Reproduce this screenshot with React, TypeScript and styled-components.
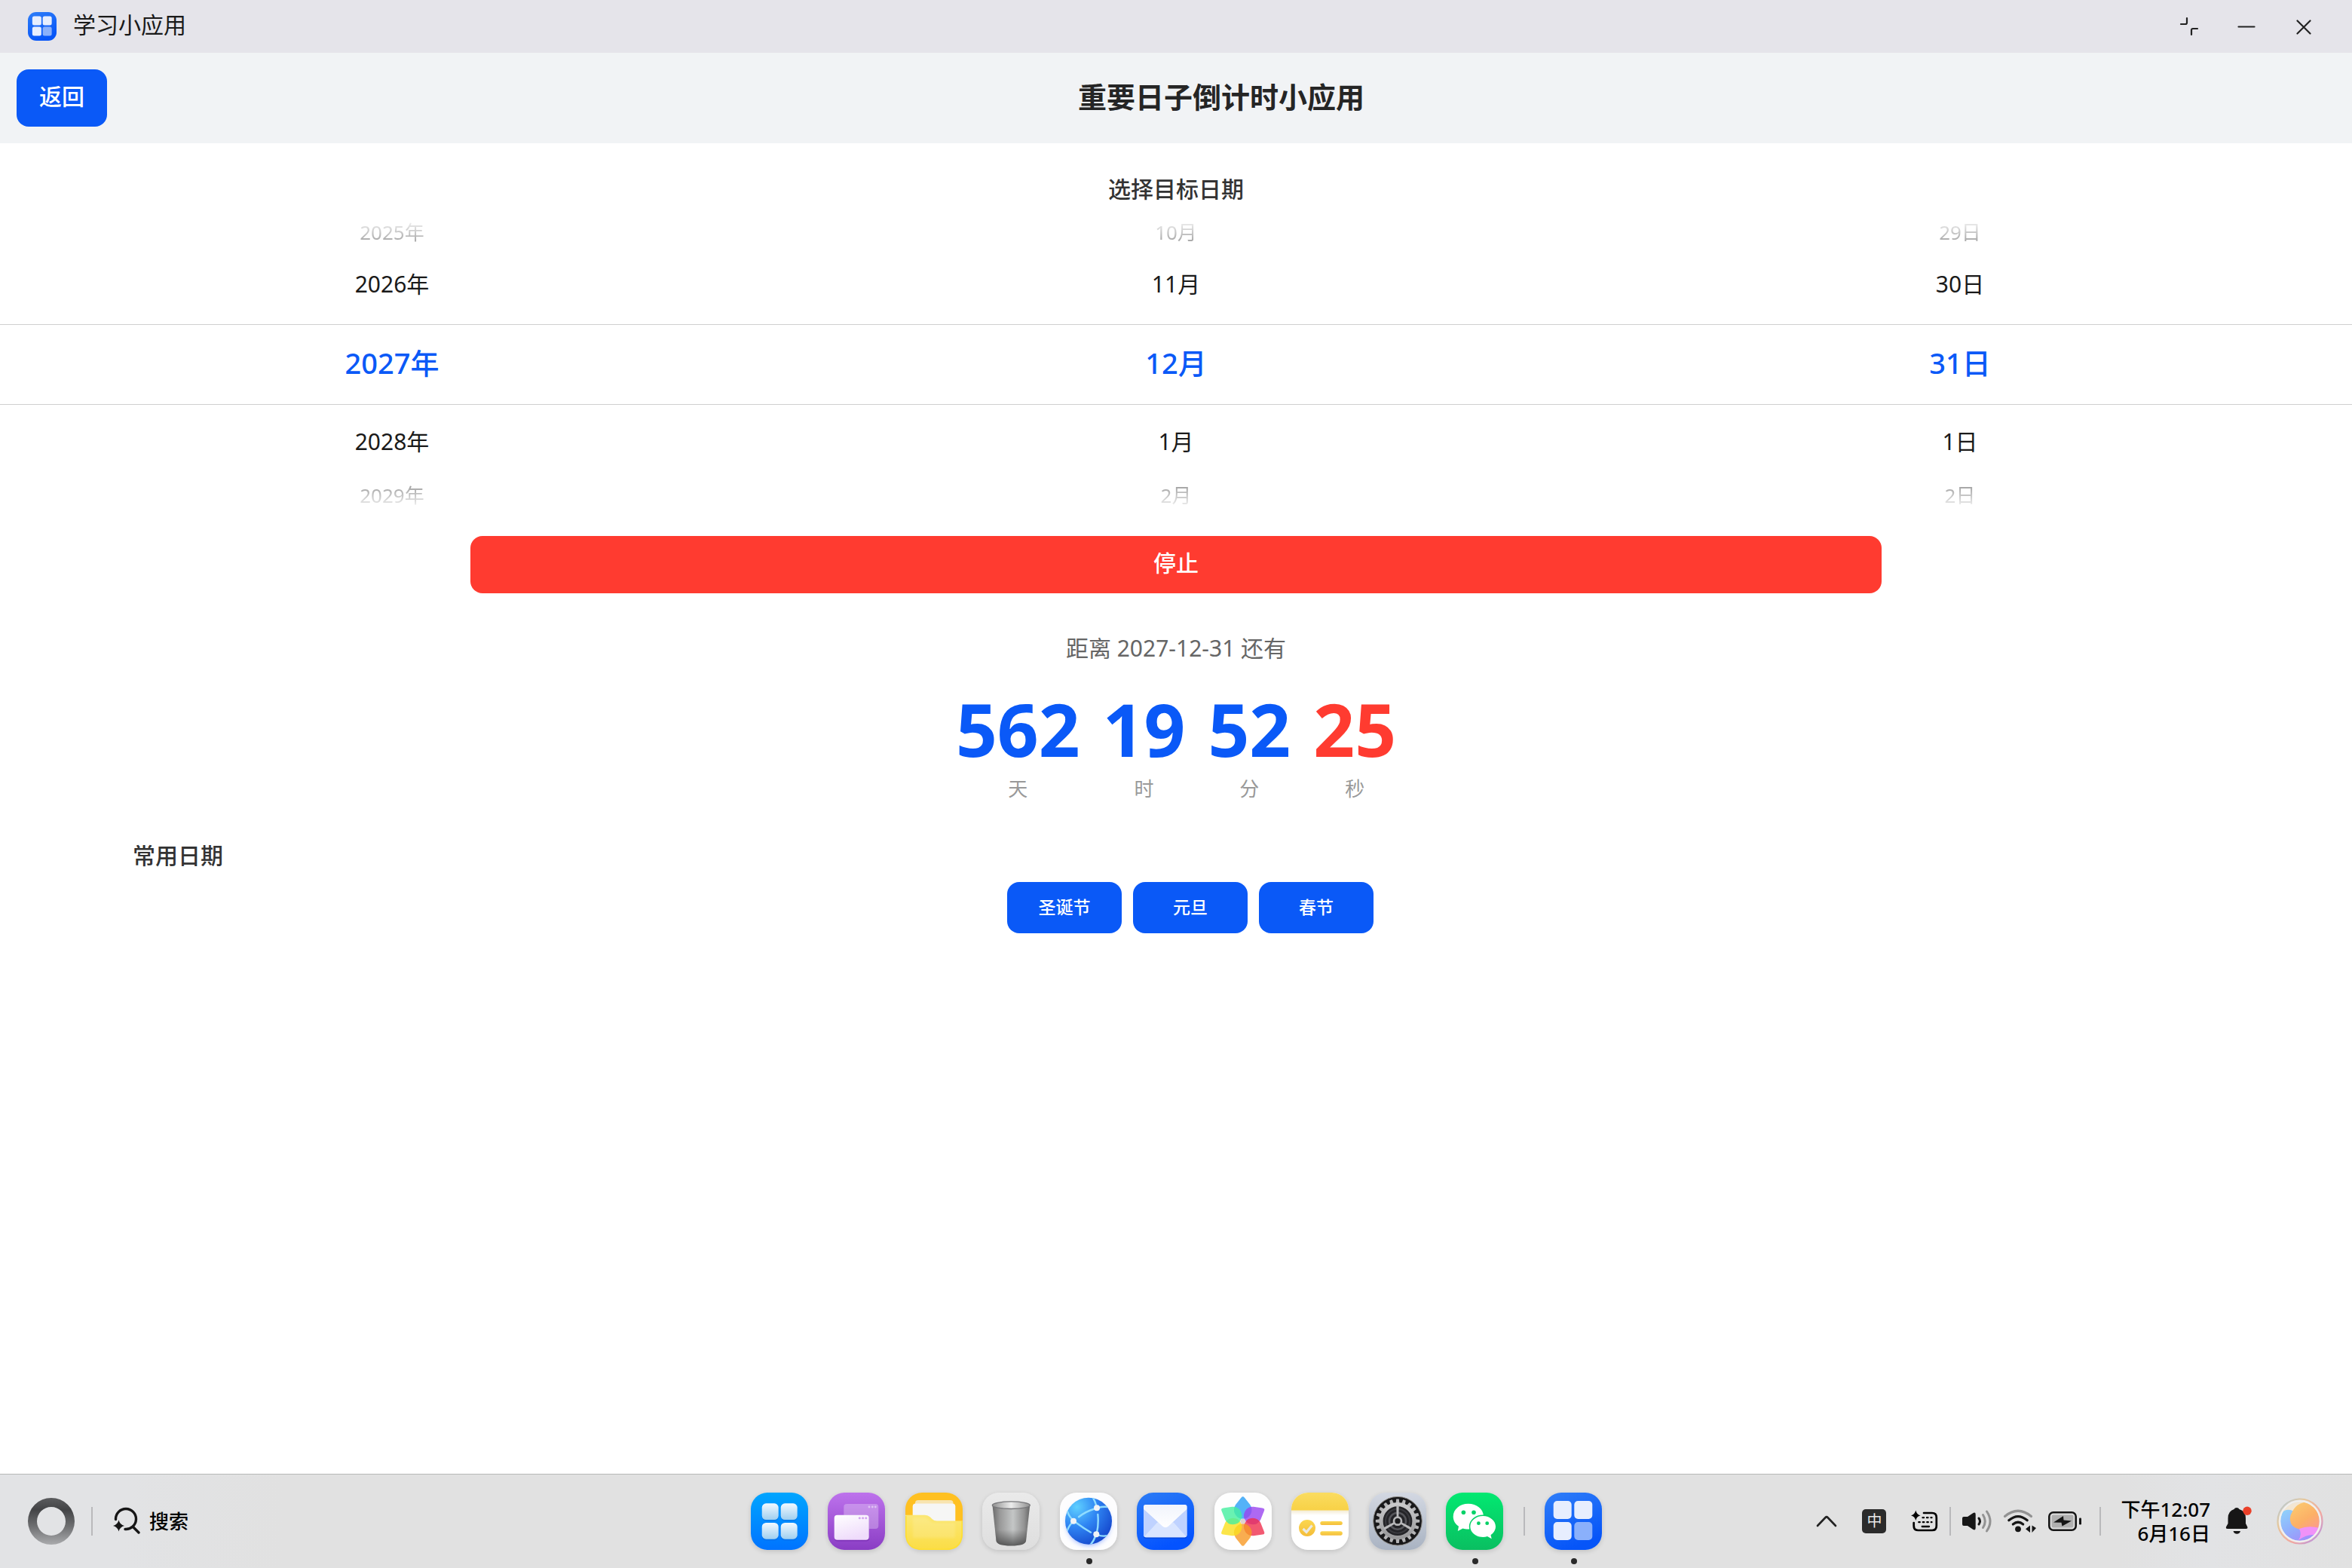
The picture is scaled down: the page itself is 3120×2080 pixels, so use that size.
import React from "react";
import styled, { createGlobalStyle, css } from "styled-components";

const GlobalStyle = createGlobalStyle`
  *, *::before, *::after { box-sizing: border-box; }
  body { margin: 0; background: #fff; }
  button { font: inherit; border: 0; padding: 0; background: none; cursor: pointer; color: inherit; }
  h1, h2, p, ul, dl, dd, dt { margin: 0; padding: 0; }
  ul { list-style: none; }
  svg { display: block; overflow: visible; }
`;

const blue = "#0a59f7";
const red = "#ff3b30";

const Screen = styled.div`
  min-height: 100vh;
  display: flex;
  flex-direction: column;
  font-family: "Noto Sans", "Noto Sans CJK SC", sans-serif;
  font-size: 30px;
  line-height: 40px;
  color: #1a1a1a;
`;

/* ---------- window frame ---------- */

const TitleBar = styled.header`
  display: flex;
  align-items: center;
  height: 70px;
  padding: 0 26px 0 37px;
  background: #e5e4ea;
`;

const AppName = styled.span`
  flex: 1;
  padding: 0 0 4px 22px;
`;

const WindowButton = styled.button`
  display: grid;
  place-items: center;
  width: 76px;
  height: 70px;
`;

const AppHeader = styled.div`
  display: flex;
  align-items: center;
  height: 120px;
  padding: 0 22px;
  background: #f1f3f5;
`;

const AppTitle = styled.h1`
  flex: 1;
  padding-bottom: 4px;
  text-align: center;
  font-size: 38px;
  line-height: 48px;
  font-weight: 700;
  color: #252525;
`;

const ActionButton = styled.button<{ $size: "back" | "wide" | "chip" }>`
  border-radius: 16px;
  background: ${(p) => (p.$size === "wide" ? red : blue)};
  color: #fff;
  font-weight: 500;
  ${(p) => p.$size === "back" && css`height: 76px; padding: 0 30px 4px;`}
  ${(p) => p.$size === "wide" && css`height: 76px; width: 60%; margin-top: 34px; padding-bottom: 4px;`}
  ${(p) => p.$size === "chip" && css`height: 68px; width: 152px; padding-bottom: 2px; font-size: 23px;`}
`;

/* ---------- page ---------- */

const Main = styled.main`
  flex: 1;
  display: flex;
  flex-direction: column;
  align-items: center;
  padding-top: 41px;
`;

const SectionTitle = styled.h2`
  font-size: 30px;
  line-height: 40px;
  font-weight: 500;
  color: #333;
`;

const Picker = styled.div`
  display: grid;
  grid-template-columns: repeat(3, 1fr);
  width: 100%;
  margin-top: 18px;
`;

const Wheel = styled.ul`
  text-align: center;
`;

type Slot = "top" | "near" | "selected" | "bottom";

const slotStyles = {
  top: css`
    height: 39px;
    padding-bottom: 2px;
    font-size: 26px;
    mask-image: linear-gradient(to bottom, transparent, rgba(0, 0, 0, 0.48));
  `,
  near: css`
    height: 102px;
    padding-bottom: 4px;
    font-size: 30px;
  `,
  selected: css`
    height: 107px;
    padding-bottom: 6px;
    font-size: 38px;
    font-weight: 500;
    color: ${blue};
    border-top: 1px solid #cfcfcf;
    border-bottom: 1px solid #cfcfcf;
  `,
  bottom: css`
    height: 38px;
    padding-bottom: 2px;
    font-size: 26px;
    mask-image: linear-gradient(to top, transparent, rgba(0, 0, 0, 0.48));
  `,
};

const WheelItem = styled.li<{ $slot: Slot }>`
  display: flex;
  align-items: center;
  justify-content: center;
  ${(p) => slotStyles[p.$slot]}
`;

const Target = styled.p`
  margin-top: 53px;
  color: #666;
`;

const Countdown = styled.dl`
  display: flex;
  gap: 30px;
  margin-top: 31px;
`;

const Unit = styled.div`
  display: flex;
  flex-direction: column-reverse;
  align-items: center;
  gap: 5px;
`;

const UnitValue = styled.dd<{ $color: string }>`
  font-size: 96px;
  line-height: 112px;
  font-weight: 700;
  color: ${(p) => p.$color};
`;

const UnitName = styled.dt`
  font-size: 26px;
  line-height: 36px;
  color: #999;
`;

const Presets = styled.section`
  width: 100%;
  margin-top: 51px;
  padding: 0 calc(5% - 18px) 0 calc(5% + 20px);
`;

const PresetRow = styled.div`
  display: flex;
  justify-content: center;
  gap: 15px;
  margin-top: 15px;
`;

/* ---------- task bar ---------- */

const TaskBar = styled.footer`
  display: grid;
  grid-template-columns: 1fr auto 1fr;
  align-items: center;
  height: 125px;
  border-top: 1px solid #b6b9b7;
  background: linear-gradient(to right, #e2e3e5 5%, #e1e1e1 12%, #e1e1e1 90%, #e2e3e5 94%, #e1e1e1);
`;

const StartArea = styled.div`
  display: flex;
  align-items: center;
  padding-left: 37px;
  gap: 22px;
`;

const SearchButton = styled.button`
  display: flex;
  align-items: center;
  gap: 12px;
  padding-left: 5px;
  font-size: 26px;
  font-weight: 500;
  color: #000;
`;

const Divider = styled.span`
  width: 2px;
  height: 38px;
  background: #b9b9bb;
`;

const Dock = styled.nav`
  display: flex;
  align-items: center;
  gap: 26px;
`;

const DockApps = styled.div`
  display: flex;
  justify-content: space-between;
  width: 999px;
`;

const DockButton = styled.button<{ $running?: boolean }>`
  position: relative;
  width: 76px;
  height: 76px;
  border-radius: 22px;
  box-shadow: 0 2px 6px rgba(0, 0, 0, 0.14);
  ${(p) =>
    p.$running &&
    css`
      &::after {
        content: "";
        position: absolute;
        left: 35px;
        bottom: -19px;
        width: 8px;
        height: 8px;
        border-radius: 50%;
        background: #2a2a2a;
      }
    `}
`;

const Tray = styled.div`
  display: flex;
  align-items: center;
  justify-content: flex-end;
  padding-right: 38px;
`;

const TrayGroup = styled.div<{ $gap: number; $after: number }>`
  display: flex;
  align-items: center;
  gap: ${(p) => p.$gap}px;
  padding: 0 ${(p) => p.$after}px 0 15px;
`;

const InputBadge = styled.button`
  width: 32px;
  height: 32px;
  border-radius: 5px;
  background: #2b2b2b;
  color: #e8e8e8;
  font-size: 20px;
  line-height: 30px;
`;

const Clock = styled.time`
  padding: 0 21px 0 26px;
  text-align: right;
  font-size: 26px;
  line-height: 32px;
  font-weight: 500;
  color: #000;
`;

const ClockLine = styled.span`
  display: block;
`;

const BellButton = styled.button`
  margin-right: 33px;
`;

/* ---------- icons ---------- */

const Tile = ({ fill }: { fill: string }) => <rect width="76" height="76" rx="22" fill={fill} />;

const Grad = ({ id, from, to, diagonal }: { id: string; from: string; to: string; diagonal?: boolean }) => (
  <linearGradient id={id} x1="0" y1="0" x2={diagonal ? "0.4" : "0"} y2="1">
    <stop stopColor={from} />
    <stop offset="1" stopColor={to} />
  </linearGradient>
);

const AppLogo = ({ size, id }: { size: number; id: string }) => (
  <svg width={size} height={size} viewBox="0 0 76 76" aria-hidden="true">
    <defs><Grad id={id} from="#2f7ef8" to="#0655f8" diagonal /></defs>
    <Tile fill={`url(#${id})`} />
    <g fill="#e7eefe">
      <rect x="11.7" y="11" width="24" height="24" rx="5" />
      <rect x="39.3" y="11" width="24" height="24" rx="5" />
      <rect x="11.7" y="39" width="24" height="24" rx="5" />
      <rect x="39.3" y="39" width="24" height="24" rx="5" fill="#8ab0fb" />
    </g>
  </svg>
);

const IconSvg = ({ children }: { children: React.ReactNode }) => (
  <svg width="76" height="76" viewBox="0 0 76 76" aria-hidden="true">{children}</svg>
);

const LauncherIcon = () => (
  <IconSvg>
    <defs>
      <Grad id="lnBg" from="#00a5ff" to="#0073ff" />
      <Grad id="lnSq" from="#f2f9ff" to="#9fcff0" />
    </defs>
    <Tile fill="url(#lnBg)" />
    {[[14.7, 14.3], [39.7, 14.3], [14.7, 40], [39.7, 40]].map(([x, y]) => (
      <g key={`${x}-${y}`}>
        <rect x={x} y={y + 1.5} width="22" height="22" rx="5.5" fill="#0060d0" opacity=".35" />
        <rect x={x} y={y} width="22" height="21.7" rx="5.5" fill="url(#lnSq)" />
      </g>
    ))}
  </IconSvg>
);

const WindowsIcon = () => (
  <IconSvg>
    <defs>
      <Grad id="wnBg" from="#bd72ec" to="#8a3dc4" />
      <Grad id="wnFr" from="#ffffff" to="#efdcfb" diagonal />
    </defs>
    <Tile fill="url(#wnBg)" />
    <rect x="21.3" y="15" width="46" height="33" rx="4" fill="#fff" opacity=".28" />
    <rect x="9" y="31.5" width="46" height="33" rx="4" fill="#6a1fa5" opacity=".45" />
    <rect x="8.7" y="29.7" width="46" height="33" rx="4" fill="url(#wnFr)" />
    {[55, 59.3, 63.3].map((x) => <circle key={x} cx={x} cy="19" r="1.4" fill="#fff" opacity=".45" />)}
    {[42.3, 46.6, 50.8].map((x) => <circle key={x} cx={x} cy="33.8" r="1.5" fill="#d2a3f0" />)}
  </IconSvg>
);

const FolderIcon = () => (
  <IconSvg>
    <defs>
      <clipPath id="fdClip"><rect width="76" height="76" rx="22" /></clipPath>
      <Grad id="fdFr" from="#fbe774" to="#fbdd45" />
      <filter id="fdBlur"><feGaussianBlur stdDeviation="1.5" /></filter>
    </defs>
    <g clipPath="url(#fdClip)">
      <rect width="76" height="76" fill="#ffc021" />
      <rect x="13" y="10" width="50.5" height="20" rx="4" fill="#f8e4b0" />
      <rect x="9.7" y="14.5" width="56.6" height="40" rx="4" fill="#f6f6f5" />
      <path d="M0 29.7H26Q30 29.7 33 32.5L35.500 35Q38 37.500 42 37.500H76V76H0Z" fill="url(#fdFr)" />
      <path d="M10 33H27L36 40H66V60H10Z" fill="#fff" opacity=".13" filter="url(#fdBlur)" />
    </g>
    <path d="M.8 31V54Q.8 75.200 22 75.200H54Q75.200 75.200 75.200 54V38" fill="none" stroke="#ffdf30" strokeWidth="1.5" />
  </IconSvg>
);

const TrashIcon = () => (
  <IconSvg>
    <defs>
      <Grad id="trBg" from="#eaeaea" to="#dedede" />
      <linearGradient id="trBody" x1="0" x2="1" y1="0" y2="0">
        <stop stopColor="#6b6b6b" /><stop offset=".2" stopColor="#999" /><stop offset=".55" stopColor="#c4c6c6" />
        <stop offset=".85" stopColor="#929292" /><stop offset="1" stopColor="#666" />
      </linearGradient>
      <linearGradient id="trShade" x1="0" x2="0" y1="0" y2="1">
        <stop offset=".6" stopColor="#444" stopOpacity="0" /><stop offset="1" stopColor="#3a3a3a" stopOpacity=".75" />
      </linearGradient>
      <linearGradient id="trIn" x1="0" x2="1" y1="0" y2="0">
        <stop stopColor="#8f8f8f" /><stop offset=".5" stopColor="#ececec" /><stop offset="1" stopColor="#909090" />
      </linearGradient>
    </defs>
    <Tile fill="url(#trBg)" />
    <path d="M13.500 17L18.500 64Q19.500 70.500 38.300 70.500T58 64L63.200 17Z" fill="url(#trBody)" />
    <path d="M13.500 17L18.500 64Q19.500 70.500 38.300 70.500T58 64L63.200 17Z" fill="url(#trShade)" />
    <ellipse cx="38.300" cy="16.700" rx="25" ry="4.800" fill="url(#trIn)" stroke="#77777a" strokeWidth="1.300" />
  </IconSvg>
);

const BrowserIcon = () => (
  <IconSvg>
    <defs>
      <radialGradient id="brBall" cx=".25" cy=".2" r=".95">
        <stop stopColor="#5fd0ff" /><stop offset=".45" stopColor="#2f85f3" /><stop offset="1" stopColor="#1240c8" />
      </radialGradient>
      <filter id="brBlur" x="-30%" y="-30%" width="160%" height="160%"><feGaussianBlur stdDeviation="3" /></filter>
      <clipPath id="brClip"><circle cx="38" cy="37.700" r="31" /></clipPath>
    </defs>
    <Tile fill="#fdfdfe" />
    <circle cx="38" cy="41" r="29" fill="#5580ff" opacity=".6" filter="url(#brBlur)" />
    <circle cx="38" cy="37.700" r="31" fill="url(#brBall)" />
    <g clipPath="url(#brClip)" fill="none" stroke="#8fdcff" strokeWidth="2.400" strokeLinecap="round">
      <path d="M43 5Q47 12 48.500 18M51 20Q58 18 66 19.300M46 21.500Q34 25 25 32.300M50.300 29Q51.500 42 49 53M16 35Q11 30 9 22M16 40Q11 45 9 53M21 39.500Q31 47 41 52.700M50 56Q57 59 66 56.500M47 58Q45 64 40 70" />
    </g>
    <g fill="#f1f3f6">
      <circle cx="49" cy="20.300" r="4" /><circle cx="18" cy="37.700" r="4" /><circle cx="48.300" cy="55.300" r="4" />
    </g>
  </IconSvg>
);

const MailIcon = () => (
  <IconSvg>
    <defs>
      <Grad id="mlBg" from="#2c7cf5" to="#0453ff" diagonal />
      <Grad id="mlBody" from="#a8c0f8" to="#cfe0ff" />
      <Grad id="mlFlap" from="#f1f4fc" to="#ffffff" />
    </defs>
    <Tile fill="url(#mlBg)" />
    <rect x="9" y="18" width="57.500" height="43" rx="3" fill="#0633b0" opacity=".4" />
    <rect x="9" y="16" width="57.500" height="43.300" rx="3" fill="url(#mlBody)" />
    <path d="M10 58.500L27 39.500H49L65.500 58.500Q65 59.300 63.500 59.300H12Q10.500 59.300 10 58.500Z" fill="#d9e5ff" />
    <path d="M9 22L27 39.500L10 58Q9 57 9 56ZM66.500 22L49 39.500L65.500 58Q66.500 57 66.500 56Z" fill="#bfd2ff" />
    <path d="M9 22V19Q9 16 12 16H63.500Q66.500 16 66.500 19V22L42 44.500Q38 48 34 44.500Z" fill="url(#mlFlap)" />
  </IconSvg>
);

const petals = ["#2aa0f7", "#9a45f0", "#f0304f", "#f89a25", "#fbe01e", "#45f0a0"];

const GalleryIcon = () => (
  <IconSvg>
    <Tile fill="#fefefe" />
    <g transform="translate(37.700 38)">
      {petals.map((color, i) => (
        <path
          key={color}
          d="M-1.500 -31Q0 -33 1.500 -31L9 -21.500Q13 -15.500 9.500 -9.500Q6 -4 0 -4T-9.500 -9.500Q-13 -15.500 -9 -21.500Z"
          transform={`rotate(${i * 60})`}
          fill={color}
          stroke={color}
          strokeWidth="1.500"
          opacity=".8"
        />
      ))}
      <circle r="3.300" fill="#ddd3cf" />
    </g>
  </IconSvg>
);

const NotesIcon = () => (
  <IconSvg>
    <defs>
      <clipPath id="ntClip"><rect width="76" height="76" rx="22" /></clipPath>
      <Grad id="ntTop" from="#fadc60" to="#f8d146" />
      <Grad id="ntBar" from="#fbd750" to="#f4bd3a" />
      <Grad id="ntSh" from="#f3ead0" to="#ffffff" />
    </defs>
    <g clipPath="url(#ntClip)">
      <rect width="76" height="76" fill="#fff" />
      <rect y="23" width="76" height="7" fill="url(#ntSh)" />
      <rect width="76" height="23.500" fill="url(#ntTop)" />
    </g>
    <circle cx="21" cy="47" r="11" fill="url(#ntBar)" />
    <path d="M15.500 48L20 52.500L27.500 43.500" fill="none" stroke="#e9e9e4" strokeWidth="3.200" />
    <rect x="38.300" y="38" width="29.500" height="5" rx="2.500" fill="url(#ntBar)" />
    <rect x="38.300" y="51.300" width="29.500" height="5.500" rx="2.700" fill="url(#ntBar)" />
  </IconSvg>
);

const SettingsIcon = () => (
  <IconSvg>
    <defs>
      <Grad id="stBg" from="#d3d8e2" to="#a9b3c2" />
      <Grad id="stGear" from="#c9c9cb" to="#98989a" />
    </defs>
    <Tile fill="url(#stBg)" />
    <circle cx="38" cy="37.700" r="32.300" fill="#18181a" stroke="#8d8a85" strokeWidth="1" />
    {Array.from({ length: 20 }, (_, i) => (
      <path key={i} d="M35.600 14L36.200 8.500H39.800L40.400 14Z" transform={`rotate(${i * 18} 38 37.700)`} fill="#b5b5b7" />
    ))}
    <circle cx="38" cy="37.700" r="22" fill="#242428" stroke="url(#stGear)" strokeWidth="5.200" />
    <circle cx="38" cy="37.700" r="16" fill="none" stroke="#3a3a3f" strokeWidth="2" />
    <circle cx="38" cy="37.700" r="11" fill="none" stroke="#55555a" strokeWidth="2.500" />
    {[0, 120, 240].map((a) => (
      <path key={a} d="M36.300 17L36.700 33H39.300L39.700 17Z" transform={`rotate(${a} 38 37.700)`} fill="#b9b9bb" />
    ))}
    <circle cx="38" cy="37.700" r="5" fill="#1c1c1e" stroke="#b5b5b7" strokeWidth="2.700" />
  </IconSvg>
);

const WeChatIcon = () => (
  <IconSvg>
    <defs><Grad id="wcBg" from="#02e871" to="#0abf61" /></defs>
    <Tile fill="url(#wcBg)" />
    <path d="M29.700 14.800C18.500 14.800 9.700 22.300 9.700 31.700C9.700 37 12.500 41.700 17 44.800L15.800 51L22.500 47.500C25 48.300 27 48.600 31 48.500L50 31C49.500 22 41 14.800 29.700 14.800Z" fill="#fff" />
    <g fill="#05d268"><circle cx="23.400" cy="26.300" r="2.800" /><circle cx="37" cy="26.300" r="2.800" /></g>
    <ellipse cx="49.200" cy="45" rx="18.400" ry="15.600" fill="#05d066" />
    <path d="M49.200 30.900C39.800 30.900 32.300 37.200 32.300 45S39.800 59 49.200 59C51.300 59 53.300 58.700 55 58.100L60.700 61.200L59.500 56.200C63.500 53.500 66 49.500 66 45C66 37.200 58.600 30.900 49.200 30.900Z" fill="#fff" />
    <g fill="#05d066"><circle cx="43.400" cy="40.700" r="2.400" /><circle cx="54.700" cy="40.700" r="2.400" /></g>
  </IconSvg>
);

const RingIcon = () => (
  <svg width="62" height="62" viewBox="0 0 62 62" aria-hidden="true">
    <defs>
      <linearGradient id="rg" x1="0" y1="0" x2="0" y2="1">
        <stop stopColor="#5b5c5e" /><stop offset=".25" stopColor="#434446" />
        <stop offset=".6" stopColor="#6d6e70" /><stop offset="1" stopColor="#aaabad" />
      </linearGradient>
    </defs>
    <path fillRule="evenodd" fill="url(#rg)" d="M31 0A31 31 0 1 1 31 62A31 31 0 1 1 31 0ZM31 12A19 19 0 1 0 31 50A19 19 0 1 0 31 12Z" />
  </svg>
);

const SearchIcon = () => (
  <svg width="36" height="36" viewBox="0 0 36 36" fill="none" stroke="#161616" strokeWidth="3.400" strokeLinecap="round" aria-hidden="true">
    <path d="M3.500 15.500A13.500 13.500 0 1 1 16 28.500M26 25L34 33" />
    <path d="M7.500 16.500Q9 22.500 15 24Q9 25.500 7.500 31.500Q6 25.500 0 24Q6 22.500 7.500 16.500Z" fill="#161616" stroke="none" />
  </svg>
);

const KeyboardIcon = () => (
  <svg width="36" height="30" viewBox="0 0 36 30" fill="none" stroke="#000" strokeWidth="2.700" strokeLinecap="round" aria-hidden="true">
    <path d="M17 4H28Q33.800 4 33.800 10V21Q33.800 27 28 27H9.500Q3.700 27 3.700 21V17" />
    <path d="M14.700 22H24" strokeWidth="2.300" />
    <path d="M15.500 10.200H27.500" strokeWidth="2.300" strokeDasharray="1.500 4" />
    <path d="M10.300 16.200H27.500" strokeWidth="2.300" strokeDasharray="1.500 4" />
    <path d="M6.300 .5Q7.500 6 12.500 7.300Q7.500 8.600 6.300 14Q5 8.600 0 7.300Q5 6 6.300 .5Z" fill="#000" stroke="none" />
  </svg>
);

const SpeakerIcon = () => (
  <svg width="39" height="32" viewBox="0 0 39 32" fill="none" strokeLinecap="round" strokeWidth="3" aria-hidden="true">
    <path d="M2 10H7L14.500 5Q17.700 3.500 17.700 7V25Q17.700 28.500 14.500 27L7 22H2Q0 22 0 20V12Q0 10 2 10Z" fill="#161616" />
    <path d="M22 12Q25 16 22 20" stroke="#161616" />
    <path d="M27.500 7.500Q33 16 27.500 24.500M32.500 3Q41.500 16 32.500 29" stroke="#929292" />
  </svg>
);

const WifiIcon = () => (
  <svg width="43" height="32" viewBox="0 0 43 32" fill="none" strokeLinecap="round" strokeWidth="3.200" aria-hidden="true">
    <path d="M1.500 9.500Q19 -5 36.500 9.500" stroke="#929292" />
    <path d="M6.800 14.800Q19 4.500 31.200 14.800M12.300 20Q19 14.500 25.700 20" stroke="#161616" />
    <circle cx="19" cy="26.300" r="3.900" fill="#161616" />
    <path d="M35 21.500V31L29 26.200ZM37.500 21.500V31L43 25Z" fill="#161616" />
  </svg>
);

const BatteryIcon = () => (
  <svg width="44" height="26" viewBox="0 0 44 26" aria-hidden="true">
    <rect x="1.300" y="1.300" width="35.400" height="23.400" rx="5.500" fill="none" stroke="#161616" strokeWidth="2.600" />
    <rect x="4.500" y="4.500" width="29" height="17" rx="2" fill="#b0b0b0" />
    <path d="M20 6L7 14.500L17.500 14.800L18.500 19.500L31 12.500L20.500 11.500Z" fill="#161616" />
    <rect x="41" y="8.500" width="3" height="9" rx="1.300" fill="#161616" />
  </svg>
);

const BellIcon = () => (
  <svg width="34" height="36" viewBox="0 0 34 36" fill="#161616" aria-hidden="true">
    <path d="M14 0Q16.500 0 17.500 2Q26 4.500 26 14V21L28.300 25.500Q29 28 26.500 28H1.800Q-.700 28 0 25.500L2.500 21V14Q2.500 4.500 10.500 2Q11.500 0 14 0Z" />
    <path d="M9.500 31H19Q18 34.800 14.300 34.800T9.500 31Z" />
    <circle cx="28" cy="4.300" r="5.700" fill="#ea4029" />
  </svg>
);

const OrbIcon = () => (
  <svg width="62" height="62" viewBox="0 0 62 62" aria-hidden="true">
    <defs>
      <linearGradient id="obRing" x1="0" y1="0" x2="1" y2="1">
        <stop stopColor="#a8cbe8" /><stop offset=".3" stopColor="#e5c79a" /><stop offset=".65" stopColor="#f2a7a0" /><stop offset="1" stopColor="#a78ff0" />
      </linearGradient>
      <linearGradient id="obBlue" x1="0" y1="0" x2=".6" y2="1">
        <stop offset=".2" stopColor="#90d6fa" /><stop offset=".6" stopColor="#90b2fc" /><stop offset="1" stopColor="#a389fa" />
      </linearGradient>
      <linearGradient id="obSun" x1="0" y1="0" x2=".7" y2="1">
        <stop stopColor="#fbcf72" /><stop offset=".6" stopColor="#fcb066" /><stop offset="1" stopColor="#fb9a90" />
      </linearGradient>
      <clipPath id="obClip"><circle cx="31" cy="31" r="26" /></clipPath>
    </defs>
    <circle cx="31" cy="31" r="29.500" fill="#eceaea" stroke="url(#obRing)" strokeWidth="2.200" />
    <g clipPath="url(#obClip)">
      <rect width="62" height="62" fill="url(#obBlue)" />
      <path d="M4 22Q12 13 21 17L34 20L40 0H4Z" fill="#f3e6d2" />
      <path d="M21 18Q27 6 42 5L62 10V46H50Q44 40 33 42Q19 40 18 30Q17 24 21 18Z" fill="url(#obSun)" />
      <path d="M30 41Q42 36 57 40L50 49Q40 48 29 56Q34 49 30 41Z" fill="#f092f8" />
    </g>
    <circle cx="31" cy="31" r="26.500" fill="none" stroke="#f3f1ee" strokeWidth="1.500" />
  </svg>
);

/* ---------- data ---------- */

const slots: Slot[] = ["top", "near", "selected", "near", "bottom"];

const wheels = [
  { label: "年", items: ["2025年", "2026年", "2027年", "2028年", "2029年"] },
  { label: "月", items: ["10月", "11月", "12月", "1月", "2月"] },
  { label: "日", items: ["29日", "30日", "31日", "1日", "2日"] },
];

const units = [
  { name: "天", value: "562", color: blue },
  { name: "时", value: "19", color: blue },
  { name: "分", value: "52", color: blue },
  { name: "秒", value: "25", color: red },
];

const dockApps = [
  { name: "启动台", icon: <LauncherIcon /> },
  { name: "多任务", icon: <WindowsIcon /> },
  { name: "文件管理", icon: <FolderIcon /> },
  { name: "回收站", icon: <TrashIcon /> },
  { name: "浏览器", icon: <BrowserIcon />, running: true },
  { name: "邮件", icon: <MailIcon /> },
  { name: "图库", icon: <GalleryIcon /> },
  { name: "备忘录", icon: <NotesIcon /> },
  { name: "设置", icon: <SettingsIcon /> },
  { name: "微信", icon: <WeChatIcon />, running: true },
];

export default function App() {
  return (
    <Screen>
      <GlobalStyle />
      <TitleBar>
        <AppLogo size={38} id="logoTitle" />
        <AppName>学习小应用</AppName>
        <WindowButton aria-label="还原">
          <svg width="24" height="24" viewBox="0 0 24 24" fill="none" stroke="#222" strokeWidth="2.200" strokeLinecap="round">
            <path d="M1 9H7Q9 9 9 7V1M23 15H17Q15 15 15 17V23" />
          </svg>
        </WindowButton>
        <WindowButton aria-label="最小化">
          <svg width="24" height="24" viewBox="0 0 24 24" stroke="#222" strokeWidth="2.200" strokeLinecap="round">
            <path d="M1.500 12.500H22.500" />
          </svg>
        </WindowButton>
        <WindowButton aria-label="关闭">
          <svg width="24" height="24" viewBox="0 0 24 24" stroke="#222" strokeWidth="2.200" strokeLinecap="round">
            <path d="M3.500 4.500L20.500 21.500M20.500 4.500L3.500 21.500" />
          </svg>
        </WindowButton>
      </TitleBar>

      <AppHeader>
        <ActionButton $size="back">返回</ActionButton>
        <AppTitle>重要日子倒计时小应用</AppTitle>
      </AppHeader>

      <Main>
        <SectionTitle>选择目标日期</SectionTitle>
        <Picker>
          {wheels.map((wheel) => (
            <Wheel key={wheel.label} role="listbox" aria-label={wheel.label}>
              {wheel.items.map((item, i) => (
                <WheelItem key={item} role="option" aria-selected={i === 2} $slot={slots[i]}>
                  {item}
                </WheelItem>
              ))}
            </Wheel>
          ))}
        </Picker>
        <ActionButton $size="wide">停止</ActionButton>
        <Target>距离 2027-12-31 还有</Target>
        <Countdown>
          {units.map((unit) => (
            <Unit key={unit.name}>
              <UnitName>{unit.name}</UnitName>
              <UnitValue $color={unit.color}>{unit.value}</UnitValue>
            </Unit>
          ))}
        </Countdown>
        <Presets>
          <SectionTitle>常用日期</SectionTitle>
          <PresetRow>
            {["圣诞节", "元旦", "春节"].map((name) => (
              <ActionButton key={name} $size="chip">{name}</ActionButton>
            ))}
          </PresetRow>
        </Presets>
      </Main>

      <TaskBar>
        <StartArea>
          <button aria-label="控制中心"><RingIcon /></button>
          <Divider />
          <SearchButton><SearchIcon />搜索</SearchButton>
        </StartArea>
        <Dock>
          <DockApps>
            {dockApps.map((app) => (
              <DockButton key={app.name} aria-label={app.name} $running={app.running}>{app.icon}</DockButton>
            ))}
          </DockApps>
          <Divider />
          <DockButton aria-label="学习小应用" $running><AppLogo size={76} id="logoDock" /></DockButton>
        </Dock>
        <Tray>
          <TrayGroup $gap={33} $after={15}>
            <button aria-label="展开">
              <svg width="28" height="16" viewBox="0 0 28 16" fill="none" stroke="#222" strokeWidth="2.600" strokeLinecap="round" strokeLinejoin="round">
                <path d="M2 14L12.500 3Q14 1.500 15.500 3L26 14" />
              </svg>
            </button>
            <InputBadge>中</InputBadge>
            <button aria-label="键盘"><KeyboardIcon /></button>
          </TrayGroup>
          <Divider />
          <TrayGroup $gap={16} $after={24}>
            <button aria-label="音量"><SpeakerIcon /></button>
            <button aria-label="无线网络"><WifiIcon /></button>
            <button aria-label="电池"><BatteryIcon /></button>
          </TrayGroup>
          <Divider />
          <Clock>
            <ClockLine>下午12:07</ClockLine>
            <ClockLine>6月16日</ClockLine>
          </Clock>
          <BellButton aria-label="通知"><BellIcon /></BellButton>
          <button aria-label="助手"><OrbIcon /></button>
        </Tray>
      </TaskBar>
    </Screen>
  );
}
